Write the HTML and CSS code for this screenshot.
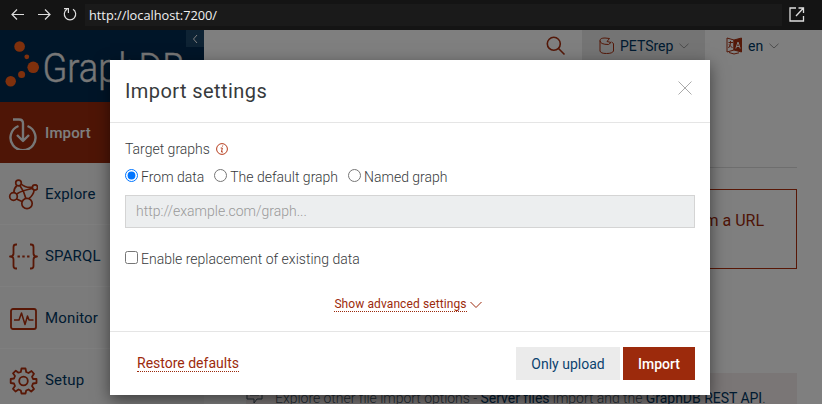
FILE: index.html
```html
<!DOCTYPE html>
<html lang="en">
<head>
<meta charset="utf-8">
<title>GraphDB Import</title>
<link rel="stylesheet" href="styles.css">
</head>
<body>
<header class="browser">
  <svg class="nav-icons" width="85" height="30" viewBox="0 0 85 30"><path d="M24 14.5H12.5M17 9.5L12 14.5L17 19.5M38 14.5H49.5M45 9.5L50 14.5L45 19.5M67 9.3A5.7 5.7 0 1 0 73 9.3M64 8.700H68.400V13"/></svg>
  <div class="address">http://localhost:7200/</div>
  <svg class="open-icon" width="16" height="16" viewBox="0 0 16 16"><path d="M7 1H1V14H14.5V9M9.5 1H14.5V6M14.5 1L7 9"/></svg>
</header>
<div class="app">
  <aside class="sidebar">
    <div class="brand">
      <svg class="logo" width="204" height="72" viewBox="0 0 204 72"><g class="dots"><circle cx="19.6" cy="16.5" r="5.3"/><circle cx="26.8" cy="26.8" r="2.4"/><circle cx="33.2" cy="37.3" r="5.8"/><circle cx="21.6" cy="44.4" r="3.5"/><circle cx="10.7" cy="51.3" r="5.2"/></g><text x="42.500" y="51.5" textLength="142" lengthAdjust="spacingAndGlyphs">GraphDB</text></svg>
      <span class="collapse"><svg width="6" height="10" viewBox="0 0 6 10"><path d="M5 1L1.5 5L5 9"/></svg></span>
    </div>
    <nav>
      <a class="item active"><svg width="30" height="34" viewBox="0 0 30 34"><path d="M5 3.500H11Q15 3.500 15 7.500V25M9 19L15 25L21 19M10.500 10A12.500 12.500 0 1 0 19.500 10"/></svg>Import</a>
      <a class="item"><svg width="30" height="34" viewBox="0 0 30 34"><g class="thin"><circle cx="10.500" cy="6" r="2.800"/><circle cx="27" cy="10.500" r="2.600"/><circle cx="5.500" cy="19.500" r="3.800"/><circle cx="19" cy="26.500" r="5.200"/><path d="M9 8.500Q6 11 5.800 15.600M13.200 7Q17 11 24.300 10.300M24.500 11.500Q15 13 8.500 17M12 8.800Q16 14 17.800 21.200M26.200 13Q25.500 18 21 21.500M8.500 22L14 24.500"/></g></svg>Explore</a>
      <a class="item"><svg width="30" height="34" viewBox="0 0 30 34"><path d="M9 5.500H8Q5.500 5.500 5.500 8V14.500Q5.500 17.500 2 17.500Q5.500 17.500 5.500 20.500V27Q5.500 29.500 8 29.500H9M22 5.500H23Q25.500 5.500 25.500 8V14.500Q25.500 17.500 29 17.500Q25.500 17.500 25.500 20.500V27Q25.500 29.500 23 29.500H22"/><path class="dotline" d="M9.500 17.500H21.500"/></svg>SPARQL</a>
      <a class="item"><svg width="30" height="34" viewBox="0 0 30 34"><rect x="3" y="8" width="25" height="20" rx="2"/><path class="fine" d="M6 19H11L13.500 12L17 23.500L19.500 15L21 19H25.500"/></svg>Monitor</a>
      <a class="item"><svg width="30" height="34" viewBox="0 0 30 34"><circle cx="15.500" cy="18" r="4.300"/><path d="M13.500 5.500H17.500L18.200 9L20.500 10L23.500 8L26 10.800L24 13.700L25 16H28.500V20L25 20.500L24 23L26 26L23.200 28.500L20.500 26.500L18.200 27.500L17.500 30.500H13.500L12.800 27.500L10.500 26.500L7.500 28.500L5 25.800L7 23L6 20.500L2.700 20V16L6 15.500L7 13L5 10.300L7.800 7.700L10.500 9.700L12.800 9Z"/></svg>Setup</a>
    </nav>
  </aside>
  <main class="content">
    <div class="toolbar">
      <svg class="search" width="20" height="20" viewBox="0 0 20 20"><circle cx="7.800" cy="7.800" r="6.500"/><path d="M12.500 12.500L18.500 18.500"/></svg>
      <div class="repo"><svg width="16" height="18" viewBox="0 0 16 18"><path d="M1 3.500V14Q1.500 16.500 7.500 16.500T14.500 14V6.500L12.500 5M1 3.500Q1 1 6 1L10.500 1.500L8 4.500L12 5.500L9.500 7.500Q1 7.500 1 3.500"/></svg><span>PETSrep</span><svg class="chevron" width="10" height="6" viewBox="0 0 10 6"><path d="M.5.8L5 5L9.500.8"/></svg></div>
      <div class="lang"><svg width="17" height="18" viewBox="0 0 17 18"><path d="M8 3L1 1V15L8 13ZM3 15.500L8 17L13 15.800M2.500 5.500H7M4.500 4V5.500Q4.500 8.500 2.500 11M3 7.500L6.500 11"/><path class="solid" d="M8 3L15.500 1V15L8 13Z"/><path class="letter-mark" d="M9.800 11.500L12 5L14.200 11.500M10.600 9.500H13.400"/></svg><span>en</span><svg class="chevron" width="10" height="6" viewBox="0 0 10 6"><path d="M.5.8L5 5L9.500.8"/></svg></div>
    </div>
    <div class="rule"></div>
    <div class="url-card">Get RDF data from a URL</div>
    <div class="notice"><svg width="18" height="18" viewBox="0 0 18 18"><path d="M1 1H16V10H11L8 14V10H1ZM4 6H13"/></svg><span>Explore other file import options - <b>Server files</b> import and the <b>GraphDB REST API</b>.</span></div>
  </main>
  <div class="backdrop"></div>
</div>
<section class="modal">
  <div class="modal-head"><h1>Import settings</h1><svg width="14" height="14" viewBox="0 0 14 14"><path d="M.5.5L13.500 13.500M13.500.5L.5 13.500"/></svg></div>
  <div class="modal-body">
    <div class="label"><span>Target graphs</span><svg width="12" height="12" viewBox="0 0 12 12"><circle cx="6" cy="6" r="5.400"/><path d="M6.700 2.500L6.500 3.500M4.700 5H6.300L5.500 9H7"/></svg></div>
    <div class="choices">
      <label><input type="radio" name="graph" checked>From data</label>
      <label><input type="radio" name="graph">The default graph</label>
      <label><input type="radio" name="graph">Named graph</label>
    </div>
    <input class="graph-url" type="text" placeholder="http://example.com/graph..." disabled>
    <label class="replace"><input type="checkbox">Enable replacement of existing data</label>
    <div class="advanced"><a>Show advanced settings</a><svg width="12" height="8" viewBox="0 0 12 8"><path d="M.5 1L6 6.500L11.500 1"/></svg></div>
  </div>
  <div class="modal-foot"><a class="restore">Restore defaults</a><button class="secondary">Only upload</button><button class="primary">Import</button></div>
</section>
</body>
</html>
```
FILE: styles.css
```css
* { box-sizing: border-box; }
body { margin: 0; width: 822px; height: 404px; overflow: hidden; font: 300 14px Roboto, sans-serif; color: #373a3c; position: relative; background: #fff; }
svg { display: block; flex: none; fill: none; stroke: currentColor; }
.browser { height: 30px; background: #141414; display: flex; align-items: center; color: #ddd; }
.nav-icons { stroke-width: 1.2; }
.address { width: 697px; height: 22px; background: #1a1a1a; padding-left: 4px; font: 400 12.8px/23px "Open Sans", sans-serif; letter-spacing: -.02px; color: #f0f0f0; }
.open-icon { margin-left: 7px; stroke-width: 1.3; }
.app { height: 374px; position: relative; display: flex; overflow: hidden; }
.backdrop { position: absolute; inset: 0; background: rgba(0, 0, 0, .5); }
.sidebar { width: 204px; flex: none; background: #f7f7f7; }
.brand { height: 72px; background: #002b50; position: relative; }
.dots { fill: #ff6018; stroke: none; }
.logo text { font: 300 41px Roboto, sans-serif; fill: #eee; stroke: #eee; stroke-width: .4; }
.collapse { position: absolute; top: 0; right: 0; width: 18px; height: 17px; background: #1d4668; color: #fff; display: grid; place-items: center; }
.item { height: 62px; display: flex; align-items: center; gap: 7px; padding: 1px 0 0 8px; border-bottom: 1px solid #fff; color: #003663; font-size: 15px; font-weight: 400; letter-spacing: .15px; }
.item svg { color: #b02e0c; stroke-width: 1.8; stroke-linejoin: round; }
.item.active { height: 61px; border: 0; padding-top: 0; background: #9c2a0c; color: #fff; font-weight: 500; }
.item.active svg { color: #eee; stroke-width: 2.4; }
.item .thin { stroke-width: 1.7; }
.item .fine { stroke-width: 1.5; }
.dotline { stroke-dasharray: 2.4 2.4; }
.content { flex: 1; }
.toolbar { height: 32px; display: flex; justify-content: flex-end; align-items: center; color: #a93010; }
.search { margin-right: 16px; stroke-width: 1.6; }
.repo, .lang { display: flex; align-items: center; height: 32px; font-size: 14px; font-weight: 400; }
.repo { width: 123px; background: #e8e8e8; padding-left: 17px; }
.repo span, .lang span { color: #003663; margin: 0 6px 0 5px; }
.lang { width: 117px; padding-left: 21px; }
.chevron { color: #999; }
.solid { fill: #a93010; }
.letter-mark { stroke: #fff; }
.rule { height: 1px; margin: 105px 25px 21px 44px; background: #ddd; }
.url-card { height: 80px; margin: 0 25px 0 44px; border: 1px solid #b02e0c; padding: 21px 32px; text-align: right; font-size: 16px; line-height: 20px; font-weight: 400; color: #9c2a0c; }
.notice { height: 40px; margin: 104px 25px 0 42px; background: #f4eded; display: flex; align-items: center; padding: 10px 0 0; color: #435565; font-size: 14px; letter-spacing: -.03px; white-space: nowrap; }
.notice span { margin-left: 11px; }
.notice b { font-weight: 400; color: #003663; }
.modal { position: absolute; left: 110px; top: 60px; width: 600px; height: 335px; background: #fff; box-shadow: 0 5px 15px rgba(0, 0, 0, .5); }
.modal-head { height: 63px; padding: 0 18px 0 15px; display: flex; align-items: center; justify-content: space-between; border-bottom: 1px solid #e5e5e5; }
.modal-head svg { color: #aaa; margin-bottom: 6px; }
h1 { margin: 0; font-size: 20px; font-weight: 400; letter-spacing: .42px; }
.modal-body { height: 208px; padding: 17px 15px 0; }
.label { display: flex; align-items: center; height: 18px; gap: 6px; }
.label svg { color: #b63d1d; }
.choices { display: flex; gap: 10px; height: 20px; margin-top: 9px; }
.choices label, .replace { display: flex; align-items: center; }
.choices input, .replace input { width: 13px; height: 13px; margin: 0 3px 3px 0; }
.graph-url { display: block; width: 570px; height: 33px; margin-top: 8px; padding: 0 10px 2px; border: 1px solid #d4d4d4; background: #eceeef; font: 300 14px Roboto, sans-serif; }
.graph-url::placeholder { color: #999; opacity: 1; }
.replace { height: 20px; margin-top: 21px; }
.advanced { display: flex; align-items: center; justify-content: center; gap: 3px; margin-top: 28px; padding-right: 4px; color: #9c2a0c; font-size: 12px; font-weight: 400; letter-spacing: .1px; }
.advanced a { line-height: 14px; border-bottom: 1px dotted; }
.modal-foot { height: 64px; border-top: 1px solid #e5e5e5; display: flex; align-items: center; padding: 0 15px 0 27px; }
.restore { color: #9c2a0c; border-bottom: 1px dotted; font-weight: 400; line-height: 16px; margin-right: auto; }
button { height: 33px; border: 0; padding: 0; font: 400 14px Roboto, sans-serif; }
.secondary { width: 104px; background: #ebebeb; color: #0b436f; margin-right: 3px; }
.primary { width: 72px; background: #9c2a0c; color: #fff; font-weight: 500; }
```
